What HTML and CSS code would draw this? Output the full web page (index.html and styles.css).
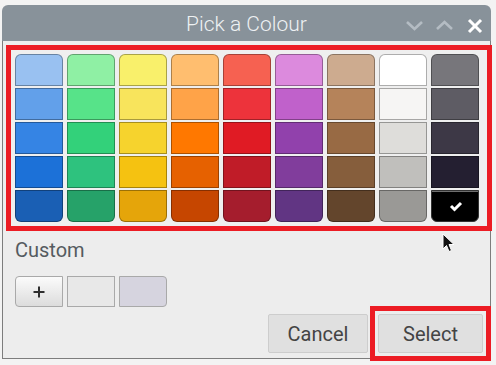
FILE: index.html
```html
<!DOCTYPE html>
<html>
<head>
<meta charset="utf-8">
<link rel="stylesheet" href="styles.css">
</head>
<body>
<div class="window">
  <div class="titlebar">
    <div></div>
    <div class="title">Pick a Colour</div>
    <div class="controls">
      <svg width="80" height="36" viewBox="0 0 80 36">
        <polyline points="2,16 9.5,23 17,16" fill="none" stroke="#b4bcc3" stroke-width="2.6"/>
        <polyline points="32,23 39.5,16 47,23" fill="none" stroke="#b4bcc3" stroke-width="2.6"/>
        <line x1="64" y1="14" x2="76" y2="26" stroke="#fff" stroke-width="3"/>
        <line x1="76" y1="14" x2="64" y2="26" stroke="#fff" stroke-width="3"/>
      </svg>
    </div>
  </div>
  <div class="content">
    <div class="palette">
      <div class="sw top" style="background:#99c1f1"></div>
      <div class="sw top" style="background:#8ff0a4"></div>
      <div class="sw top" style="background:#f9f06b"></div>
      <div class="sw top" style="background:#ffbe6f"></div>
      <div class="sw top" style="background:#f66151"></div>
      <div class="sw top" style="background:#dc8add"></div>
      <div class="sw top" style="background:#cdab8f"></div>
      <div class="sw top" style="background:#ffffff"></div>
      <div class="sw top" style="background:#77767b"></div>

      <div class="sw" style="background:#62a0ea"></div>
      <div class="sw" style="background:#57e389"></div>
      <div class="sw" style="background:#f8e45c"></div>
      <div class="sw" style="background:#ffa348"></div>
      <div class="sw" style="background:#ed333b"></div>
      <div class="sw" style="background:#c061cb"></div>
      <div class="sw" style="background:#b5835a"></div>
      <div class="sw" style="background:#f6f5f4"></div>
      <div class="sw" style="background:#5e5c64"></div>

      <div class="sw" style="background:#3584e4"></div>
      <div class="sw" style="background:#33d17a"></div>
      <div class="sw" style="background:#f6d32d"></div>
      <div class="sw" style="background:#ff7800"></div>
      <div class="sw" style="background:#e01b24"></div>
      <div class="sw" style="background:#9141ac"></div>
      <div class="sw" style="background:#986a44"></div>
      <div class="sw" style="background:#deddda"></div>
      <div class="sw" style="background:#3d3846"></div>

      <div class="sw" style="background:#1c71d8"></div>
      <div class="sw" style="background:#2ec27e"></div>
      <div class="sw" style="background:#f5c211"></div>
      <div class="sw" style="background:#e66100"></div>
      <div class="sw" style="background:#c01c28"></div>
      <div class="sw" style="background:#813d9c"></div>
      <div class="sw" style="background:#865e3c"></div>
      <div class="sw" style="background:#c0bfbc"></div>
      <div class="sw" style="background:#241f31"></div>

      <div class="sw bottom" style="background:#1a5fb4"></div>
      <div class="sw bottom" style="background:#26a269"></div>
      <div class="sw bottom" style="background:#e5a50a"></div>
      <div class="sw bottom" style="background:#c64600"></div>
      <div class="sw bottom" style="background:#a51d2d"></div>
      <div class="sw bottom" style="background:#613583"></div>
      <div class="sw bottom" style="background:#63452c"></div>
      <div class="sw bottom" style="background:#9a9996"></div>
      <div class="sw bottom selected" style="background:#000000">
        <svg width="48" height="32" viewBox="0 0 48 32">
          <polyline points="20,16 23.5,19.5 30,13" fill="none" stroke="#fff" stroke-width="3"/>
        </svg>
      </div>
    </div>

    <div class="custom-label">Custom</div>
    <div class="custom-row">
      <div class="cbtn plus">
        <svg width="12" height="12" viewBox="0 0 12 12">
          <line x1="6" y1="0.5" x2="6" y2="11.5" stroke="#2e2e2e" stroke-width="2"/>
          <line x1="0.5" y1="6" x2="11.5" y2="6" stroke="#2e2e2e" stroke-width="2"/>
        </svg>
      </div>
      <div class="cbtn c1"></div>
      <div class="cbtn c2"></div>
    </div>

    <div class="actions">
      <div class="btn cancel">Cancel</div>
      <div class="btn select">Select</div>
    </div>
  </div>
</div>
<svg class="cursor" width="14" height="20" viewBox="0 0 14 20">
  <path d="M1 1 L1 16 L4.5 12.5 L7 18.5 L9.5 17.5 L7 11.5 L12 11.5 Z" fill="#111" stroke="#fff" stroke-width="1"/>
</svg>
</body>
</html>
```

FILE: styles.css
```css
html, body {
  margin: 0;
  padding: 0;
}
body {
  width: 496px;
  height: 365px;
  background: #f3f3f3;
  font-family: Roboto, "Noto Sans", "Liberation Sans", sans-serif;
  position: relative;
  overflow: hidden;
}
.window {
  margin-left: 2px;
  margin-top: 5px;
  width: 489px;
}
.titlebar {
  height: 36px;
  background: #88929a;
  border-radius: 6px 6px 0 0;
  display: grid;
  grid-template-columns: 1fr auto 1fr;
  align-items: center;
}
.title {
  font-weight: 300;
  font-size: 21px;
  color: #eef1f3;
  line-height: 36px;
  padding-top: 1px;
}
.controls {
  display: flex;
  justify-content: flex-end;
  padding-right: 6px;
  height: 36px;
}
.content {
  background: #ededed;
  border-left: 1px solid #7d7d7d;
  border-right: 1px solid #7d7d7d;
  border-bottom: 1px solid #7d7d7d;
  padding: 4px 3px 0 3px;
  box-sizing: border-box;
  height: 318px;
}
.palette {
  width: 470px;
  border: 5px solid #ec1c24;
  padding: 4px 2px 4px 4px;
  display: grid;
  grid-template-columns: repeat(9, 48px);
  grid-auto-rows: 32px;
  column-gap: 4px;
  row-gap: 2px;
  background: #efefef;
}
.sw {
  box-sizing: border-box;
  border: 1px solid rgba(0, 0, 0, 0.32);
}
.sw.top {
  border-radius: 6px 6px 0 0;
}
.sw.bottom {
  border-radius: 0 0 6px 6px;
}
.sw.selected {
  border-color: #333;
  box-shadow: inset 0 1px 0 #6e6e6e;
}
.sw.selected svg {
  display: block;
  margin: -1px;
}
.custom-label {
  margin-top: 7px;
  margin-left: 9px;
  font-size: 20px;
  line-height: 24px;
  color: #555b60;
}
.custom-row {
  display: flex;
  gap: 4px;
  margin-top: 14px;
  margin-left: 9px;
}
.cbtn {
  width: 48px;
  height: 31px;
  box-sizing: border-box;
  border: 1px solid #a9a9a9;
  display: flex;
  align-items: center;
  justify-content: center;
}
.cbtn.plus {
  background: linear-gradient(#fbfbfb, #dcdcdc);
  border-radius: 4px 0 0 4px;
}
.cbtn.c1 {
  background: #e8e8e8;
}
.cbtn.c2 {
  background: #d6d4df;
  border-radius: 0 4px 4px 0;
}
.actions {
  display: flex;
  justify-content: flex-end;
  gap: 10px;
  margin-top: 7px;
  padding-right: 4px;
}
.btn {
  height: 39px;
  box-sizing: border-box;
  background: #e0e0e0;
  border: 1px solid #cdcdcd;
  border-radius: 2px;
  font-size: 20px;
  color: #444;
  display: flex;
  align-items: center;
  justify-content: center;
}
.btn.cancel {
  width: 100px;
}
.btn.select {
  width: 105px;
  position: relative;
}
.btn.select::after {
  content: "";
  position: absolute;
  left: -9px;
  top: -9px;
  right: -9px;
  bottom: -9px;
  border: 5px solid #ec1c24;
}
.cursor {
  position: absolute;
  left: 442px;
  top: 233px;
}
```
